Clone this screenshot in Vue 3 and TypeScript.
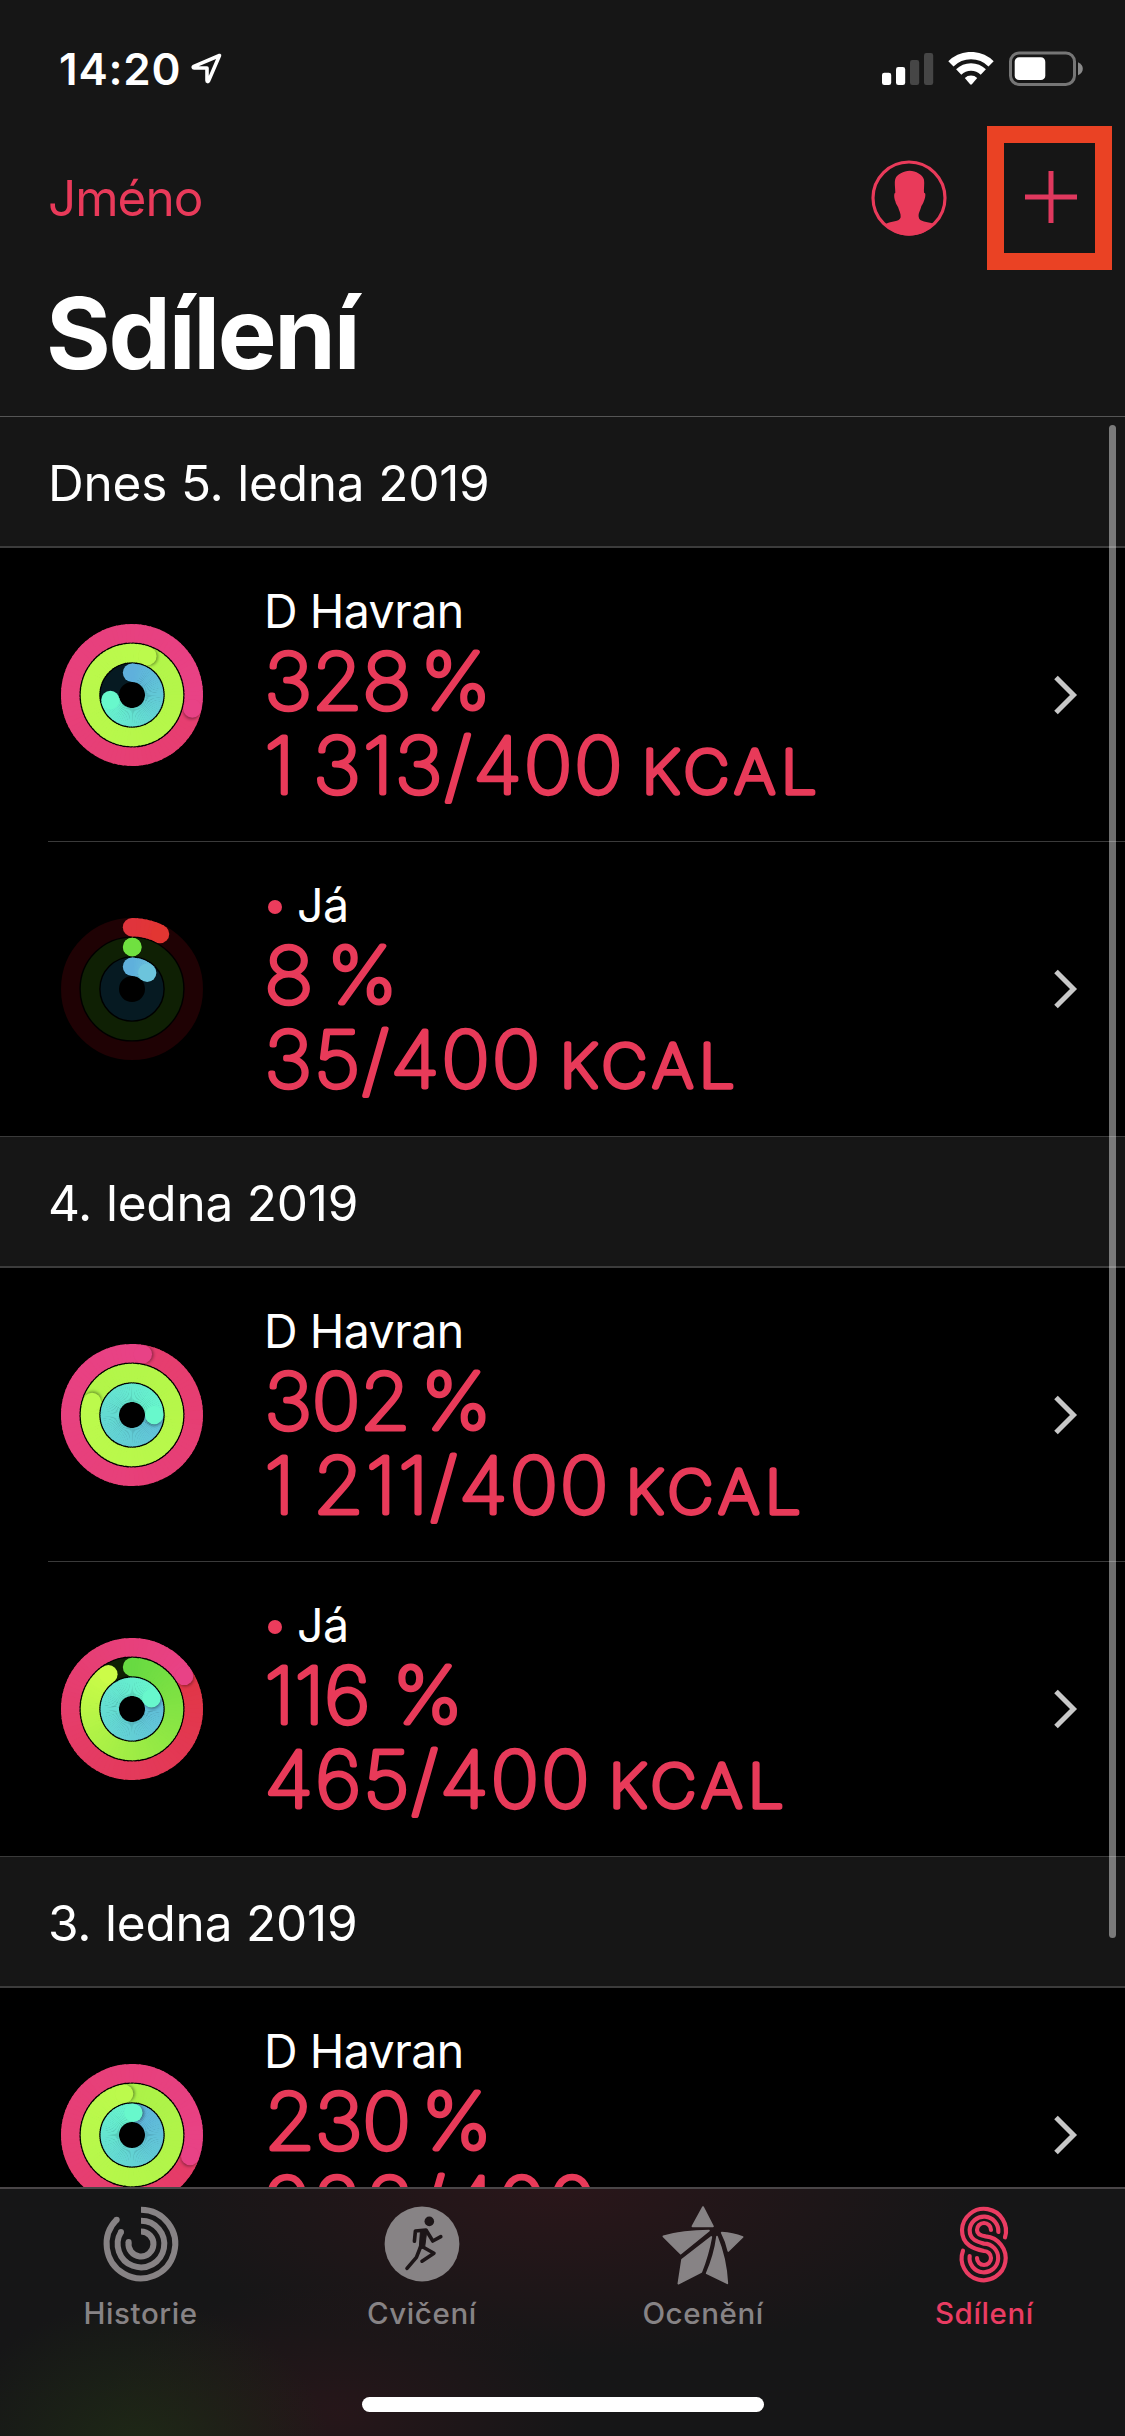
<script setup lang="ts">
interface Ring {
  value: number
  from: string
  to: string
}

interface Entry {
  name: string
  me: boolean
  percent: string
  percentUnitX: number
  energy: string
  energyUnitX: number
  rings: Ring[]
}

interface Day {
  title: string
  entries: Entry[]
}

interface Segment {
  d: string
  color: string
}

const RADII = [61.8, 42, 22.2]
const TRACKS = ['#1f0204', '#0f2004', '#061a22']
const STROKE = 18.4

const RED = '#e0343c'
const PINK = '#e84286'
const GREEN = '#68da42'
const LIME = '#ccfc48'
const BLUE = '#5fb0dc'
const AQUA = '#68f8cc'

const ring = (value: number, from: string, to: string): Ring => ({ value, from, to })

const days: Day[] = [
  {
    title: 'Dnes 5. ledna 2019',
    entries: [
      {
        name: 'D Havran', me: false, percent: '328', percentUnitX: 156, energy: '1 313/400', energyUnitX: 377,
        rings: [ring(3.285, RED, PINK), ring(3.06, '#a0ec44', '#bcfa4c'), ring(0.714, BLUE, AQUA)],
      },
      {
        name: 'Já', me: true, percent: '8', percentUnitX: 62.5, energy: '35/400', energyUnitX: 295,
        rings: [ring(0.075, RED, '#e23632'), ring(0.002, '#70e040', '#70e040'), ring(0.12, BLUE, '#6cc4dc')],
      },
    ],
  },
  {
    title: '4. ledna 2019',
    entries: [
      {
        name: 'D Havran', me: false, percent: '302', percentUnitX: 156.5, energy: '1 211/400', energyUnitX: 361,
        rings: [ring(3.028, RED, PINK), ring(2.8, '#a0ec44', '#bcfa4c'), ring(1.25, BLUE, AQUA)],
      },
      {
        name: 'Já', me: true, percent: '116', percentUnitX: 128, energy: '465/400', energyUnitX: 344,
        rings: [ring(1.16, RED, PINK), ring(0.905, GREEN, LIME), ring(1.17, BLUE, AQUA)],
      },
    ],
  },
  {
    title: '3. ledna 2019',
    entries: [
      {
        name: 'D Havran', me: false, percent: '230', percentUnitX: 157, energy: '922/400', energyUnitX: 347,
        rings: [ring(2.305, RED, PINK), ring(1.97, '#9cea44', '#bcfa4c'), ring(1.01, BLUE, AQUA)],
      },
    ],
  },
]

function channels(hex: string): number[] {
  return [1, 3, 5].map((i) => parseInt(hex.slice(i, i + 2), 16))
}

function mix(a: string, b: string, t: number): string {
  const x = channels(a)
  const y = channels(b)
  return `rgb(${x.map((v, i) => Math.round(v + (y[i] - v) * t)).join(',')})`
}

function point(turn: number, r: number): [number, number] {
  const a = turn * Math.PI * 2
  return [Math.sin(a) * r, -Math.cos(a) * r]
}

// The newest lap is painted as short arcs so the colour follows the path.
function segments(item: Ring, r: number): Segment[] {
  const begin = Math.max(0, item.value - 1)
  const span = item.value - begin
  const count = Math.max(1, Math.ceil(span * 90))
  const out: Segment[] = []
  for (let i = 0; i < count; i++) {
    const t0 = begin + (span * i) / count
    const t1 = Math.min(item.value, begin + (span * (i + 1.3)) / count)
    const [x0, y0] = point(t0, r)
    const [x1, y1] = point(t1, r)
    out.push({
      d: `M${x0.toFixed(2)} ${y0.toFixed(2)}A${r} ${r} 0 0 1 ${x1.toFixed(2)} ${y1.toFixed(2)}`,
      color: mix(item.from, item.to, t0 / item.value),
    })
  }
  return out
}

const tabs = [
  { id: 'history', label: 'Historie', active: false },
  { id: 'workouts', label: 'Cvičení', active: false },
  { id: 'awards', label: 'Ocenění', active: false },
  { id: 'sharing', label: 'Sdílení', active: true },
]
</script>

<template>
  <div class="screen">
    <header class="header">
      <div class="status">
        <div class="status-left">
          <span class="clock">14:20</span>
          <svg class="location" width="34" height="34" viewBox="0 0 34 34">
            <path d="M29.5 3.5 3.8 14.4c-1 .5-.7 1.6.3 1.6H17v12.6c0 1.2 1.2 1.3 1.6.3Z" />
          </svg>
        </div>
        <div class="status-right">
          <svg width="52" height="34" viewBox="0 0 52 34">
            <rect x="0" y="20.7" width="9.2" height="12.4" rx="2.4" fill="#fff" />
            <rect x="14" y="15" width="9.2" height="18.1" rx="2.4" fill="#fff" />
            <rect x="28" y="8" width="9.2" height="25.1" rx="2.4" fill="#464646" />
            <rect x="42" y="1" width="9.2" height="32.1" rx="2.4" fill="#464646" />
          </svg>
          <svg class="wifi" width="46" height="34" viewBox="0 0 46 34">
            <path d="M2.9 11.9a28.5 28.5 0 0 1 40.2 0" />
            <path d="M10.7 20a17.5 17.5 0 0 1 24.6 0" />
            <path class="dot" d="M16.8 26a9 9 0 0 1 12.4 0L23.9 32.3q-.9.9-1.8 0Z" />
          </svg>
          <svg class="battery" width="74" height="36" viewBox="0 0 74 36">
            <rect x="1.5" y="2" width="64" height="31.4" rx="8.6" fill="none" stroke="#767676" stroke-width="3" />
            <rect x="5.7" y="6.3" width="30.6" height="22.8" rx="4.4" fill="#fff" />
            <path d="M69 11.2q4.8 2.3 4.8 6.5t-4.8 6.5Z" fill="#8a8a8a" />
          </svg>
        </div>
      </div>

      <div class="nav">
        <span class="nav-link">Jméno</span>
        <div class="nav-actions">
          <svg class="avatar" width="76" height="76" viewBox="92 421 228 228">
            <circle cx="206" cy="535" r="108" fill="none" stroke="#e93a5a" stroke-width="9.5" />
            <path
              d="M208 453c18 0 40 12 43 27 2 12-1 28 0 39 7 0 4 15-1 27-2 7-6 10-7 14-4 16-9 19-8 31 2 18 26 12 45 22-17 22-42 35-74 35s-55-13-70-35c16-9 42-5 45-20 1-12-5-20-8-31-3-5-6-8-8-17-4-11-5-25 0-26 0-14-4-34 1-44 4-10 24-22 42-22Z"
              fill="#e93a5a"
            />
          </svg>
          <div class="highlight">
            <svg width="52" height="52" viewBox="0 0 52 52">
              <path d="M26 0V52M0 26H52" stroke="#e0385e" stroke-width="5" />
            </svg>
          </div>
        </div>
      </div>

      <h1 class="title">Sdílení</h1>
    </header>

    <main class="list">
      <section v-for="day in days" :key="day.title" class="day">
        <h2 class="day-title">{{ day.title }}</h2>
        <article v-for="(entry, i) in day.entries" :key="i" class="row">
          <svg class="rings" width="146" height="146" viewBox="-73 -73 146 146">
            <g v-for="(item, k) in entry.rings" :key="k" fill="none">
              <circle :r="RADII[k]" :stroke="TRACKS[k]" :stroke-width="STROKE" />
              <circle
                v-if="item.value < 1"
                :cx="0"
                :cy="-RADII[k]"
                :r="STROKE / 2"
                :fill="item.from"
              />
              <path
                v-for="(part, n) in segments(item, RADII[k])"
                :key="n"
                :d="part.d"
                :stroke="part.color"
                :stroke-width="STROKE"
              />
              <circle
                v-if="item.value > 1"
                class="cap-shadow"
                :cx="point(item.value + 2.2 / (6.283 * RADII[k]), RADII[k])[0]"
                :cy="point(item.value + 2.2 / (6.283 * RADII[k]), RADII[k])[1]"
                :r="STROKE / 2 - 0.6"
              />
              <circle
                :cx="point(item.value, RADII[k])[0]"
                :cy="point(item.value, RADII[k])[1]"
                :r="STROKE / 2"
                :fill="item.to"
              />
            </g>
          </svg>
          <div class="info">
            <div class="name"><i v-if="entry.me" class="bullet"></i>{{ entry.name }}</div>
            <svg class="figures" width="640" height="190" viewBox="0 0 640 190">
              <g transform="translate(-0.5 80) scale(1.065 1)">
                <text class="value">{{ entry.percent }}</text>
              </g>
              <g :transform="`translate(${entry.percentUnitX} 80) scale(1.05 1)`">
                <text class="value percent">%</text>
              </g>
              <g transform="translate(-0.5 164) scale(1.065 1)">
                <text class="value energy">{{ entry.energy }}</text>
              </g>
              <g :transform="`translate(${entry.energyUnitX} 164) scale(1.07 1)`">
                <text class="unit">KCAL</text>
              </g>
            </svg>
          </div>
          <svg class="chevron" width="28" height="44" viewBox="0 0 28 44">
            <path d="M4 4.5 21.5 22 4 39.5" />
          </svg>
        </article>
      </section>
    </main>

    <nav class="tabbar">
      <div class="tabs">
        <div v-for="tab in tabs" :key="tab.id" class="tab" :class="{ active: tab.active }">
          <svg v-if="tab.id === 'history'" class="icon" width="84" height="84" viewBox="-42 -42 84 84">
            <g fill="none" stroke="currentColor" stroke-width="6">
              <path d="M0-34.3A34.3 34.3 0 1 1-24.3-24.3" />
              <path d="M0-23.3A23.3 23.3 0 1 1-20-12" />
              <path d="M0-12.5A12.5 12.5 0 1 1-12.4-1.9" />
            </g>
            <g fill="currentColor">
              <circle cx="-24.3" cy="-24.3" r="3" />
              <circle cx="-20" cy="-12" r="3" />
              <circle cx="-12.4" cy="-1.9" r="3" />
            </g>
          </svg>
          <svg v-else-if="tab.id === 'workouts'" class="icon" width="84" height="84" viewBox="-42 -42 84 84">
            <circle r="37.4" fill="currentColor" />
            <circle cx="7.3" cy="-22.6" r="4.8" fill="#1d1618" />
            <g fill="none" stroke="#1d1618" stroke-width="3.6" stroke-linecap="round" stroke-linejoin="round">
              <path d="M-7.6-2.8-6.6-13 4-14 10.8-3 18.8-7.4" />
              <path d="M-1.5 3-5.6 13.4-15 24.4" />
              <path d="M0 2.5 12 9.2 0 17.2" />
            </g>
            <path d="M-1.5-14 5-14.5 2.6 3.6-2.8 5Z" fill="#1d1618" stroke="#1d1618" stroke-width="1" stroke-linejoin="round" />
          </svg>
          <svg v-else-if="tab.id === 'awards'" class="icon" width="84" height="84" viewBox="179 126 252 252">
            <g fill="currentColor" stroke="currentColor" stroke-width="5" stroke-linejoin="round">
              <path d="M305 141 335 199Q305 199 273 199Z" />
              <path d="M186 229Q245 213 323 212L238 281Z" />
              <path d="M330 231Q320 285 300 336L231 371 242 299Z" />
              <path d="M347 230Q374 295 378 370L316 340Q340 285 347 230Z" />
              <path d="M361 218Q395 220 424 231L381 273Q375 245 361 218Z" />
            </g>
          </svg>
          <svg v-else class="icon" width="84" height="84" viewBox="1021 126 252 252">
            <g fill="none" stroke="currentColor" stroke-width="12.5" stroke-linecap="round">
              <path d="M1210 232A66 66 0 1 0 1081 210C1081 256 1118 267 1147 273A21 21 0 1 1 1126 294" />
              <path d="M1190 216A43 43 0 1 0 1104 210C1104 240 1128 246 1147 251A43 43 0 1 1 1104 288" />
              <path d="M1168 210A21 21 0 1 0 1126 210C1126 223 1137 227 1152 229A66 66 0 1 1 1084 272" />
            </g>
          </svg>
          <span class="tab-label">{{ tab.label }}</span>
        </div>
      </div>
      <div class="home"></div>
    </nav>
    <div class="scrollbar"></div>
  </div>
</template>

<style>
body {
  background: #000;
}
</style>

<style scoped>
.screen {
  position: relative;
  display: flex;
  flex-direction: column;
  width: 1125px;
  height: 2436px;
  overflow: hidden;
  background: #000;
  color: #fff;
  font-family: Inter, 'Liberation Sans', sans-serif;
}

.header {
  flex: none;
  box-sizing: border-box;
  height: 417px;
  background: #161616;
  border-bottom: 1px solid #555;
}

.status {
  display: flex;
  justify-content: space-between;
  align-items: center;
  height: 138px;
  padding: 0 42px 0 59px;
}

.status-left,
.status-right {
  display: flex;
  align-items: center;
}

.clock {
  font-size: 44px;
  font-weight: 600;
  letter-spacing: 0.8px;
}

.location {
  margin-left: 9px;
}

.location path {
  fill: none;
  stroke: #fff;
  stroke-width: 3.6;
  stroke-linejoin: round;
}

.wifi {
  margin-left: 14px;
}

.wifi path {
  fill: none;
  stroke: #fff;
  stroke-width: 7.4;
}

.wifi .dot {
  fill: #fff;
  stroke: none;
}

.battery {
  margin-left: 15px;
}

.nav {
  display: flex;
  justify-content: space-between;
  align-items: center;
  height: 120px;
  padding: 0 13px 0 48px;
}

.nav-link {
  font-size: 49.5px;
  letter-spacing: -1px;
  color: #e93a5a;
}

.nav-actions {
  display: flex;
  align-items: center;
  gap: 40px;
}

.highlight {
  display: flex;
  align-items: center;
  justify-content: center;
  box-sizing: border-box;
  width: 125px;
  height: 144px;
  margin-top: -1px;
  border: 17px solid #ea4224;
}

.highlight svg {
  margin-left: 3px;
  margin-top: -2px;
}

.title {
  margin: 0;
  padding-left: 46px;
  font-size: 99px;
  line-height: 151px;
  font-weight: 700;
  letter-spacing: -2.3px;
}

.list {
  flex: 1;
  min-height: 0;
  overflow: hidden;
}

.day-title {
  box-sizing: border-box;
  height: 132px;
  margin: 0;
  padding-left: 48px;
  border-top: 1px solid #3a3a3a;
  border-bottom: 2px solid #3c3c3c;
  background: #161616;
  font-size: 49.5px;
  line-height: 132px;
  font-weight: 400;
  letter-spacing: -0.2px;
}

.day:first-child .day-title {
  height: 131px;
  border-top: 0;
}

.row {
  position: relative;
  display: flex;
  align-items: center;
  box-sizing: border-box;
  height: 294px;
  padding: 0 45px 1px 59px;
}

.row:not(:last-child)::after {
  content: '';
  position: absolute;
  left: 48px;
  right: 0;
  bottom: 0;
  height: 1px;
  background: #3a3a3a;
}

.rings {
  flex: none;
}

.cap-shadow {
  fill: rgba(0, 0, 0, 0.38);
  filter: blur(1.6px);
}

.info {
  flex: 1;
  height: 293px;
  padding-left: 59px;
}

.name {
  display: flex;
  align-items: center;
  height: 60px;
  padding-top: 33px;
  font-size: 46.5px;
  letter-spacing: -0.5px;
}

.bullet {
  width: 14px;
  height: 14px;
  margin: 4px 15px 0 4px;
  border-radius: 50%;
  background: #ec3c5c;
}

.figures {
  display: block;
  margin: -12px 0 0 1px;
  overflow: visible;
}

.value,
.unit {
  fill: #e83a59;
  stroke: #e83a59;
  stroke-linejoin: round;
  stroke-linecap: round;
  font-weight: 100;
}

.value {
  font-size: 76.5px;
  stroke-width: 5px;
  letter-spacing: 0;
}

.percent {
  font-size: 78px;
}

.energy {
  letter-spacing: 2.1px;
  word-spacing: -8px;
}

.unit {
  font-size: 58.5px;
  stroke-width: 5.3px;
  letter-spacing: 6px;
}

.chevron {
  flex: none;
}

.chevron path {
  fill: none;
  stroke: #c8c8c8;
  stroke-width: 5;
}

.tabbar {
  flex: none;
  display: flex;
  flex-direction: column;
  align-items: center;
  justify-content: space-between;
  box-sizing: border-box;
  height: 249px;
  padding-bottom: 24px;
  border-top: 2px solid #4a4648;
  background:
    radial-gradient(ellipse 190px 150px at 140px 262px, rgba(32, 44, 22, 0.85), transparent),
    radial-gradient(ellipse 240px 130px at 340px 225px, rgba(42, 22, 26, 0.8), transparent),
    radial-gradient(ellipse 420px 170px at 560px 0, rgba(44, 22, 26, 0.9), transparent),
    #161617;
}

.tabs {
  display: flex;
  width: 100%;
}

.tab {
  flex: 1;
  display: flex;
  flex-direction: column;
  align-items: center;
  padding-top: 13px;
  color: #878385;
}

.tab.active {
  color: #ea3c62;
}

.tab-label {
  margin-top: 8px;
  font-size: 29.5px;
  line-height: 38px;
  font-weight: 500;
  letter-spacing: 0.6px;
}

.home {
  width: 402px;
  height: 15px;
  border-radius: 8px;
  background: #fff;
}

.scrollbar {
  position: absolute;
  top: 425px;
  right: 9px;
  width: 7px;
  height: 1513px;
  border-radius: 4px;
  background: rgba(255, 255, 255, 0.43);
}
</style>
